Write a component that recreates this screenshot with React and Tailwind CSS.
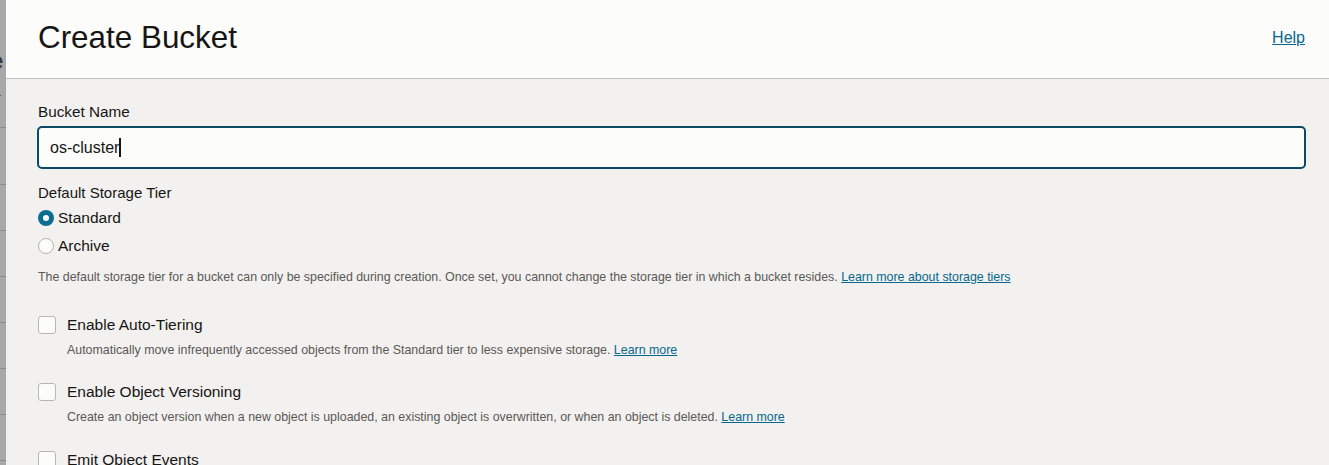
import React from 'react'

function Checkbox({ label, desc, link, className = '' }) {
  return (
    <div className={`flex flex-col ${className}`}>
      <label className="flex items-center gap-[11px] h-[20px]">
        <span className="w-[18px] h-[18px] rounded-[3px] border border-[#b9b5b0] bg-[#fcfcfb] shrink-0" />
        <span className="text-[15.5px] text-[#161513]">{label}</span>
      </label>
      {desc && (
        <p className="text-[12.4px] text-[#5b5855] ml-[29px] mt-[7px] leading-[16px]">
          {desc} <a href="#" className="text-[#05688c] underline">{link}</a>
        </p>
      )}
    </div>
  )
}

export default function App() {
  return (
    <div className="w-[1329px] h-[465px] overflow-hidden flex bg-[#f2f1f0] font-['Liberation_Sans',Arial,sans-serif]">
      {/* page behind the panel */}
      <div className="w-[6px] shrink-0 bg-[#a8a8a8] flex flex-col overflow-hidden">
        <div className="h-[50px]" />
        <span className="text-[24px] leading-[22px] font-bold text-[#3b3b3b] -ml-[10px]">e</span>
        <span className="text-[15px] leading-[16px] text-[#8a1d10] -ml-[4px] mt-[18px]">r</span>
        <div className="h-[22px] border-b border-[#8c8c8c]" />
        <div className="h-[57px] border-b border-[#8c8c8c]" />
        <div className="h-[46px] border-b border-[#8c8c8c]" />
        <div className="h-[46px] border-b border-[#8c8c8c]" />
        <div className="h-[46px] border-b border-[#8c8c8c]" />
        <div className="h-[46px] border-b border-[#8c8c8c]" />
        <div className="h-[46px] border-b border-[#8c8c8c]" />
        <div className="h-[46px] border-b border-[#8c8c8c]" />
      </div>

      <div className="flex-1 flex flex-col">
        <header className="h-[79px] shrink-0 bg-[#fcfcfb] border-b border-[#c2beb8] flex items-center justify-between pl-[32px] pr-[24px]">
          <h1 className="text-[31.4px] text-[#161513] leading-none -mt-[3px]">Create Bucket</h1>
          <a href="#" className="text-[16px] text-[#05688c] underline -mt-[3px]">Help</a>
        </header>

        <div className="pl-[32px] pr-[23px] pt-[24px] flex flex-col">
          <label className="text-[15.3px] text-[#161513] leading-[18px]">Bucket Name</label>
          <div className="mt-[5px] h-[43px] rounded-[5px] border-2 border-[#0b4a62] bg-[#fcfcfb] flex items-center px-[11px] -ml-[1px]">
            <span className="text-[16px] text-[#161513]">os-cluster</span>
            <span className="w-[2px] h-[19px] bg-[#161513]" />
          </div>

          <p className="mt-[15px] text-[15px] text-[#161513] leading-[18px]">Default Storage Tier</p>
          <div className="mt-[6px] flex items-center gap-[4px] h-[20px]">
            <span className="w-[16px] h-[16px] rounded-full bg-[#0b6e90] flex items-center justify-center">
              <span className="w-[6px] h-[6px] rounded-full bg-white" />
            </span>
            <span className="text-[15.5px] text-[#161513]">Standard</span>
          </div>
          <div className="mt-[8px] flex items-center gap-[4px] h-[20px]">
            <span className="w-[16px] h-[16px] rounded-full border border-[#b9b5b0] bg-[#fcfcfb]" />
            <span className="text-[15.5px] text-[#161513]">Archive</span>
          </div>
          <p className="mt-[13px] text-[12.4px] text-[#5b5855] leading-[16px]">
            The default storage tier for a bucket can only be specified during creation. Once set, you cannot change the storage tier in which a bucket resides.{' '}
            <a href="#" className="text-[#05688c] underline">Learn more about storage tiers</a>
          </p>

          <div className="mt-[30px] flex flex-col gap-[24px]">
            <Checkbox
              label="Enable Auto-Tiering"
              desc="Automatically move infrequently accessed objects from the Standard tier to less expensive storage."
              link="Learn more"
            />
            <Checkbox
              label="Enable Object Versioning"
              desc="Create an object version when a new object is uploaded, an existing object is overwritten, or when an object is deleted."
              link="Learn more"
            />
            <Checkbox className="mt-[1px]" label="Emit Object Events" />
          </div>
        </div>
      </div>
    </div>
  )
}
